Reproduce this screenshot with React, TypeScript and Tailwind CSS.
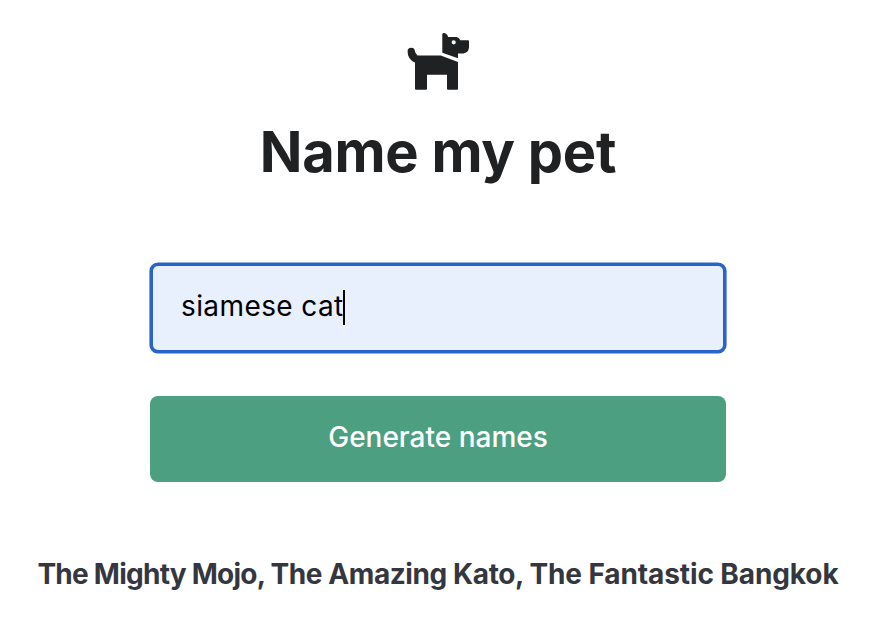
function DogIcon() {
  return (
    <svg width="64" height="60" viewBox="406 31 64 60" fill="#202123" aria-hidden="true">
      <path
        fillRule="evenodd"
        d="M442.3 52.7V34.2Q442.6 32.6 444.3 33L445.6 33.5Q447.4 34.3 448.2 36.9H456.2Q458.2 37 459.1 38.5L460.3 40.3H468Q469 40.3 469 41.3V47.6Q468.4 53 463.3 53.4H458V58.2ZM453.7 40.2a2.1 2.1 0 1 0 0 4.2a2.1 2.1 0 1 0 0-4.2Z"
      />
      <path d="M411.2 47.8A3.7 3.7 0 0 1 414.9 51.1Q415.1 53.3 417.5 55.5H440.7L458 62V88.7Q458 89.8 456.9 89.8H448.1Q447 89.8 447 88.7V74.7H427V88.7Q427 89.8 425.9 89.8H416.1Q415 89.8 415 88.7V62.4Q407.6 59.5 407.6 51.4A3.6 3.6 0 0 1 411.2 47.8Z" />
    </svg>
  );
}

export default function App() {
  return (
    <main className="flex h-[632px] w-[876px] flex-col items-center bg-white pt-[31px] font-['Inter',sans-serif]">
      <DogIcon />
      <h1 className="mt-[29px] h-[64px] whitespace-nowrap text-[56px] leading-[64px] font-bold tracking-[-0.25px] text-[#202123]">
        Name my pet
      </h1>
      <form className="mt-[79px] flex w-[576px] flex-col items-center">
        <div className="flex h-[90px] w-full items-center rounded-[8px] border-[3px] border-[#2964c9] bg-[#e8effd] pb-[2px] pl-7 text-[28px] tracking-[0.4px] text-black shadow-[0_0_0_0.6px_#2964c9]">
          <span className="whitespace-nowrap pb-[2px]">siamese cat</span>
          <span className="-ml-px h-[35px] w-[2px] bg-black" />
        </div>
        <button
          type="button"
          className="mt-[43px] h-[86px] w-full rounded-[8px] bg-[#4ca081] pb-1 text-[28px] font-medium text-white"
        >
          Generate names
        </button>
      </form>
      <p className="mt-[74px] whitespace-nowrap text-[28px] leading-[36px] font-bold text-[#353740]">
        <span className="tracking-[-0.75px]">The Mighty Mojo, </span>
        <span className="tracking-[-0.4px]">The Amazing Kato, </span>
        <span className="tracking-[-0.1px]">The Fantastic Bangkok</span>
      </p>
    </main>
  );
}
